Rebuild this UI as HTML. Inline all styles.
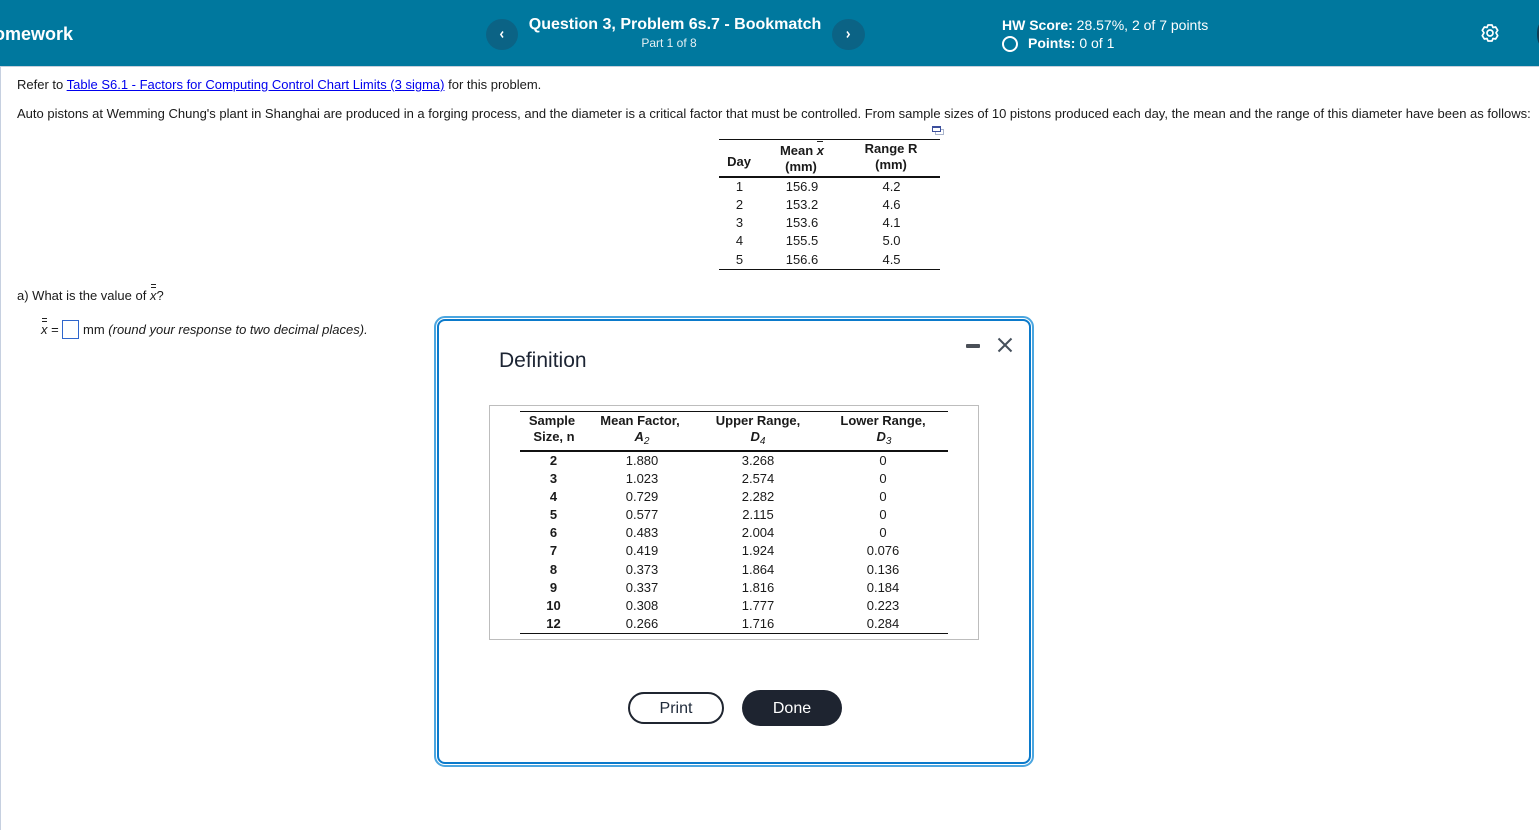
<!DOCTYPE html>
<html lang="en">
<head>
<meta charset="utf-8">
<title>Question 3, Problem 6s.7 - Bookmatch</title>
<style>
html,body{margin:0;padding:0;background:#fff}
body{width:1539px;height:830px;position:relative;overflow:hidden;font-family:"Liberation Sans",Arial,sans-serif;color:#1a1a1a;font-size:13px}
.t{position:absolute;white-space:nowrap;line-height:18px}
.c{position:absolute;white-space:nowrap;line-height:18px;transform:translateX(-50%);font-size:13px}
.b{font-weight:700}
.i{font-style:italic}
.r{position:absolute}
.w{color:#fff}
.s{font-size:14px}
sub{font-size:10px;line-height:0;vertical-align:-3px;font-weight:400}
</style>
</head>
<body>
<div class="r" style="left:0;top:0;width:1539px;height:66px;background:#00789e"></div>
<div class="r" style="left:0;top:66px;width:1539px;height:1px;background:#c6d0dc"></div>
<div class="r" style="left:0;top:66px;width:1px;height:764px;background:#c6d0e0"></div>

<div class="t b w" style="left:-12px;top:25px;font-size:18px;width:85px;overflow:hidden;text-align:right;direction:rtl">Homework</div>

<div class="r" style="left:486px;top:19px;width:32px;height:31px;border-radius:50%;background:#0b6385"></div>
<svg class="r" style="left:486px;top:19px" width="32" height="31" viewBox="0 0 32 31"><path d="M17 12.5 L14.8 15.5 L17 18.5" fill="none" stroke="#fff" stroke-width="1.5"/></svg>
<div class="r" style="left:832px;top:19px;width:33px;height:31px;border-radius:50%;background:#0b6385"></div>
<svg class="r" style="left:832px;top:19px" width="33" height="31" viewBox="0 0 33 31"><path d="M15 12.5 L17.2 15.5 L15 18.5" fill="none" stroke="#fff" stroke-width="1.5"/></svg>

<div class="c b w" style="left:675px;top:16px;font-size:16px">Question 3, Problem 6s.7 - Bookmatch</div>
<div class="c w" style="left:669px;top:34px;font-size:12px;color:#e6f0f4">Part 1 of 8</div>

<div class="t w s" style="left:1002px;top:16px"><span class="b">HW Score:</span> 28.57%, 2 of 7 points</div>
<div class="r" style="left:1002px;top:36px;width:12px;height:12px;border:2px solid #fff;border-radius:50%"></div>
<div class="t w s" style="left:1028px;top:34px"><span class="b">Points:</span> 0 of 1</div>

<svg class="r" style="left:1479px;top:22px" width="22" height="22" viewBox="0 0 22 22"><path d="M9 3 H13 L14 5.5 L16.6 5 L18.7 8.3 L17 10.8 L18.7 13.7 L16.6 17 L14 16.5 L13 19 H9 L8 16.5 L5.4 17 L3.3 13.7 L5 10.8 L3.3 8.3 L5.4 5 L8 5.5 Z" fill="none" stroke="#fff" stroke-width="1.7" stroke-linejoin="round"/><circle cx="11" cy="11" r="3" fill="none" stroke="#fff" stroke-width="1.7"/></svg>
<div class="r" style="left:1537px;top:22px;width:10px;height:24px;border-radius:50%;background:#0d3f57"></div>

<div class="t" style="left:17px;top:76px">Refer to <span style="color:#0000ee;text-decoration:underline">Table S6.1 - Factors for Computing Control Chart Limits (3 sigma)</span> for this problem.</div>
<div class="t" style="left:17px;top:105px">Auto pistons at Wemming Chung's plant in Shanghai are produced in a forging process, and the diameter is a critical factor that must be controlled. From sample sizes of 10 pistons produced each day, the mean and the range of this diameter have been as follows:</div>

<svg class="r" style="left:932px;top:126px" width="12" height="10" viewBox="0 0 12 10"><rect x="3.5" y="3.5" width="8" height="5" fill="#fff" stroke="#a9b4cc"/><rect x="0.5" y="0.5" width="8" height="5" fill="#fff" stroke="#3c4f9c"/><rect x="0" y="0" width="9" height="2" fill="#3c4f9c"/></svg>

<div class="r" style="left:719px;top:139px;width:221px;height:1px;background:#111"></div>
<div class="r" style="left:719px;top:176px;width:221px;height:2px;background:#111"></div>
<div class="r" style="left:719px;top:269px;width:221px;height:1px;background:#111"></div>
<div class="c b" style="left:739px;top:153px">Day</div>
<div class="c b" style="left:802px;top:142px">Mean <span class="i">x</span></div>
<div class="r" style="left:817px;top:141px;width:6px;height:1px;background:#222"></div>
<div class="c b" style="left:801px;top:158px">(mm)</div>
<div class="c b" style="left:891px;top:140px">Range R</div>
<div class="c b" style="left:891px;top:156px">(mm)</div>

<div class="c" style="left:739.5px;top:178px">1</div><div class="c" style="left:802px;top:178px">156.9</div><div class="c" style="left:891.5px;top:178px">4.2</div>
<div class="c" style="left:739.5px;top:196px">2</div><div class="c" style="left:802px;top:196px">153.2</div><div class="c" style="left:891.5px;top:196px">4.6</div>
<div class="c" style="left:739.5px;top:214px">3</div><div class="c" style="left:802px;top:214px">153.6</div><div class="c" style="left:891.5px;top:214px">4.1</div>
<div class="c" style="left:739.5px;top:232px">4</div><div class="c" style="left:802px;top:232px">155.5</div><div class="c" style="left:891.5px;top:232px">5.0</div>
<div class="c" style="left:739.5px;top:251px">5</div><div class="c" style="left:802px;top:251px">156.6</div><div class="c" style="left:891.5px;top:251px">4.5</div>

<div class="t" style="left:17px;top:287px">a) What is the value of <span class="i">x</span>?</div>
<div class="r" style="left:151px;top:284px;width:5px;height:1px;background:#222"></div>
<div class="r" style="left:151px;top:287px;width:5px;height:1px;background:#222"></div>

<div class="t" style="left:41px;top:321px"><span class="i">x</span> =</div>
<div class="r" style="left:42px;top:318px;width:5px;height:1px;background:#222"></div>
<div class="r" style="left:42px;top:321px;width:5px;height:1px;background:#222"></div>
<div class="r" style="left:62px;top:320px;width:15px;height:17px;border:1px solid #2f66cc"></div>
<div class="t" style="left:83px;top:321px">mm <span class="i">(round your response to two decimal places).</span></div>

<div class="r" style="left:434px;top:316px;width:596px;height:447px;border:2px solid #4ba6e0;border-radius:11px;background:#fff"></div>
<div class="r" style="left:437px;top:319px;width:590px;height:441px;border:2px solid #0b7acb;border-radius:8px;background:#fff"></div>

<div class="t" style="left:499px;top:349px;font-size:21px;line-height:24px;color:#1c2433">Definition</div>

<div class="r" style="left:966px;top:344px;width:14px;height:4px;background:#4a4f57;border-radius:1px"></div>
<svg class="r" style="left:996px;top:336px" width="18" height="18" viewBox="0 0 18 18"><path d="M2.5 2.5 L15.5 15.5 M15.5 2.5 L2.5 15.5" stroke="#46505c" stroke-width="2" fill="none"/></svg>

<div class="r" style="left:489px;top:405px;width:488px;height:233px;border:1px solid #bdbdbd"></div>
<div class="r" style="left:520px;top:411px;width:428px;height:1px;background:#111"></div>
<div class="r" style="left:520px;top:450px;width:428px;height:2px;background:#111"></div>
<div class="r" style="left:520px;top:633px;width:428px;height:1px;background:#111"></div>

<div class="c b" style="left:552px;top:412px">Sample</div>
<div class="c b" style="left:554px;top:428px">Size, n</div>
<div class="c b" style="left:640px;top:412px">Mean Factor,</div>
<div class="c b i" style="left:642px;top:428px">A<sub>2</sub></div>
<div class="c b" style="left:758px;top:412px">Upper Range,</div>
<div class="c b i" style="left:758px;top:428px">D<sub>4</sub></div>
<div class="c b" style="left:883px;top:412px">Lower Range,</div>
<div class="c b i" style="left:884px;top:428px">D<sub>3</sub></div>

<div class="c b" style="left:553.5px;top:452px">2</div><div class="c" style="left:642px;top:452px">1.880</div><div class="c" style="left:758px;top:452px">3.268</div><div class="c" style="left:883px;top:452px">0</div>
<div class="c b" style="left:553.5px;top:470px">3</div><div class="c" style="left:642px;top:470px">1.023</div><div class="c" style="left:758px;top:470px">2.574</div><div class="c" style="left:883px;top:470px">0</div>
<div class="c b" style="left:553.5px;top:488px">4</div><div class="c" style="left:642px;top:488px">0.729</div><div class="c" style="left:758px;top:488px">2.282</div><div class="c" style="left:883px;top:488px">0</div>
<div class="c b" style="left:553.5px;top:506px">5</div><div class="c" style="left:642px;top:506px">0.577</div><div class="c" style="left:758px;top:506px">2.115</div><div class="c" style="left:883px;top:506px">0</div>
<div class="c b" style="left:553.5px;top:524px">6</div><div class="c" style="left:642px;top:524px">0.483</div><div class="c" style="left:758px;top:524px">2.004</div><div class="c" style="left:883px;top:524px">0</div>
<div class="c b" style="left:553.5px;top:542px">7</div><div class="c" style="left:642px;top:542px">0.419</div><div class="c" style="left:758px;top:542px">1.924</div><div class="c" style="left:883px;top:542px">0.076</div>
<div class="c b" style="left:553.5px;top:561px">8</div><div class="c" style="left:642px;top:561px">0.373</div><div class="c" style="left:758px;top:561px">1.864</div><div class="c" style="left:883px;top:561px">0.136</div>
<div class="c b" style="left:553.5px;top:579px">9</div><div class="c" style="left:642px;top:579px">0.337</div><div class="c" style="left:758px;top:579px">1.816</div><div class="c" style="left:883px;top:579px">0.184</div>
<div class="c b" style="left:553.5px;top:597px">10</div><div class="c" style="left:642px;top:597px">0.308</div><div class="c" style="left:758px;top:597px">1.777</div><div class="c" style="left:883px;top:597px">0.223</div>
<div class="c b" style="left:553.5px;top:615px">12</div><div class="c" style="left:642px;top:615px">0.266</div><div class="c" style="left:758px;top:615px">1.716</div><div class="c" style="left:883px;top:615px">0.284</div>

<div class="r" style="left:628px;top:692px;width:92px;height:28px;border:2px solid #1f2530;border-radius:16px;background:#fff;text-align:center;line-height:30px;font-size:16px;color:#1f2a3a">Print</div>
<div class="r" style="left:742px;top:690px;width:100px;height:36px;border-radius:18px;background:#1e2430;text-align:center;line-height:38px;font-size:16px;color:#fff">Done</div>
</body>
</html>
